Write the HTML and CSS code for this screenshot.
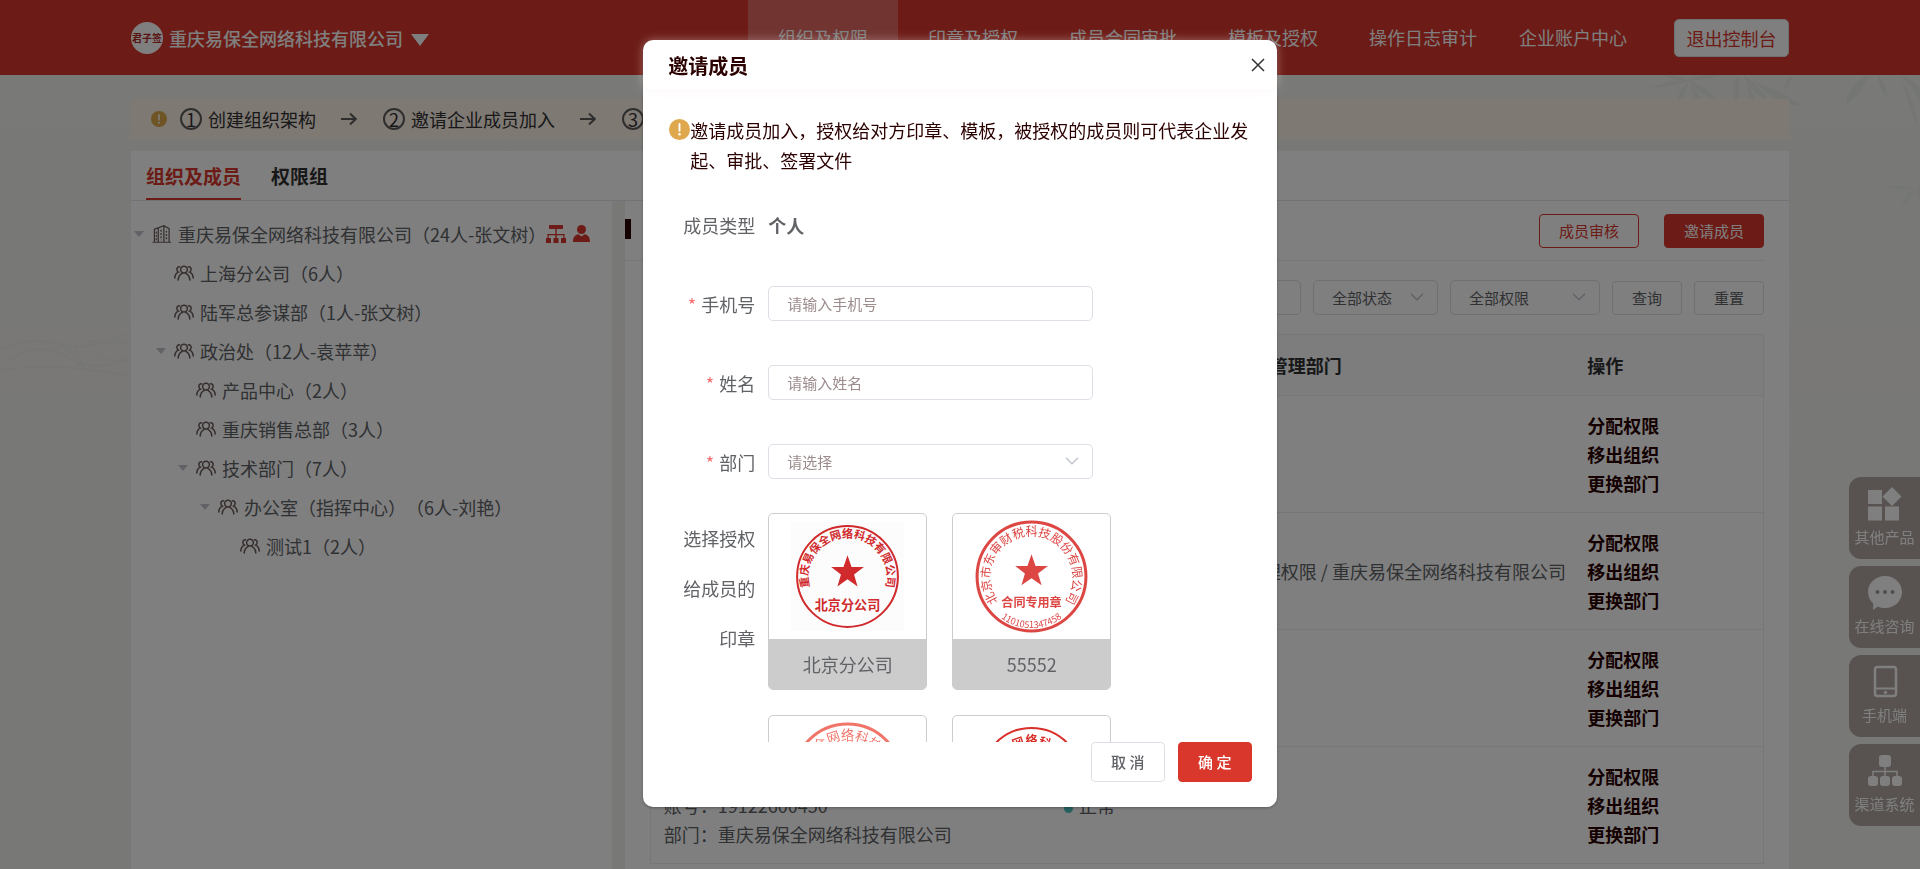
FILE: index.html
```html
<!DOCTYPE html>
<html lang="zh-CN">
<head>
    <meta charset="UTF-8">
    <meta name="viewport" content="width=device-width, initial-scale=1.0">
    <title>组织及权限</title>
    <link rel="stylesheet" href="styles.css">
</head>
<body>

    <!-- shared icons -->
    <svg class="sprite" aria-hidden="true">
        <symbol id="i-warn" viewBox="0 0 20 20">
            <circle cx="10" cy="10" r="10" fill="#dfa84c"/>
            <path d="M10 4.6v6.6" stroke="#fff" stroke-width="1.8" stroke-linecap="round"/>
            <circle cx="10" cy="14.6" r="1.2" fill="#fff"/>
        </symbol>
        <symbol id="i-arrow" viewBox="0 0 16 14">
            <path d="M0 7h15M9 1.5L14.700 7 9 12.500" fill="none" stroke="#5c5c5c" stroke-width="2"/>
        </symbol>
        <symbol id="i-down" viewBox="0 0 14 8">
            <path d="M1 .8l6 6 6-6" fill="none" stroke="#c0c4cc" stroke-width="1.4"/>
        </symbol>
        <symbol id="i-group" viewBox="0 0 20 16">
            <g fill="none" stroke="#6b5858" stroke-width="1.500" stroke-linecap="round">
                <circle cx="10" cy="4.600" r="3.400"/>
                <path d="M4.200 15c.2-3.400 1.800-5.500 4-6.600M15.800 15c-.2-3.400-1.800-5.500-4-6.600"/>
                <path d="M5.600 1.700C3.800 1.600 2.700 3 2.900 4.700c.1 1.200.8 2 1.500 2.400C2.200 8 .9 9.900.8 13M14.400 1.700c1.800-.1 2.900 1.300 2.700 3-.1 1.200-.8 2-1.500 2.400 2.200.9 3.500 2.800 3.600 5.900"/>
            </g>
        </symbol>
        <symbol id="i-building" viewBox="0 0 20 19">
            <g fill="none" stroke="#6b5858" stroke-width="1.300">
                <path d="M0 18.200h19.500M2 18V4.500L6 3v15M6 3l6-2.200V18M12 .8l5.500 3V18"/>
                <path d="M9 5v11M14.700 6v10M4 7v9" stroke-dasharray="2 1.500"/>
            </g>
        </symbol>
        <symbol id="i-star" viewBox="-18 -18 36 36">
            <path d="M0-17L4-5.500H16.200L6.500 2 10 13.800 0 6.800-10 13.800-6.500 2-16.200-5.500H-4z"/>
        </symbol>
    </svg>

    <header class="header">
        <svg class="logo" viewBox="0 0 32 32">
            <circle cx="16" cy="16" r="16" fill="#fff"/>
            <text x="16" y="20" text-anchor="middle" font-size="10" font-weight="700" fill="#b52a22">君子签</text>
        </svg>
        <span class="company">重庆易保全网络科技有限公司</span>
        <svg class="caret" viewBox="0 0 18 12"><path d="M0 0h18L9 12z" fill="#fff"/></svg>
        <nav class="nav">
            <a class="active" href="#">组织及权限</a>
            <a href="#">印章及授权</a>
            <a href="#">成员合同审批</a>
            <a href="#">模板及授权</a>
            <a href="#">操作日志审计</a>
            <a href="#">企业账户中心</a>
        </nav>
        <button class="exit">退出控制台</button>
    </header>

    <main class="page">
        <svg class="bamboo" viewBox="0 0 270 140" aria-hidden="true">
            <g fill="#e8ece6">
                <path d="M0 13Q22 4 40 6Q20 12 0 13zM12 0Q28 0 42 6Q24 6 12 0zM38 4Q56-2 72 0Q56 6 38 4zM40 6Q58 12 68 26Q50 20 40 6zM38 8Q36 20 28 26Q28 14 38 8zM40 8Q52 22 50 28Q40 20 40 8z"/>
                <path d="M88 0Q92 16 86 28Q80 14 88 0zM94 0Q112 14 118 26Q98 16 94 0zM104 6Q134 18 154 32Q120 26 104 6zM98 10Q106 22 104 28Q96 20 98 10zM142 0Q140 10 134 16Q134 6 142 0z"/>
                <path d="M218 0Q212 20 196 30Q198 10 218 0zM228 0Q238 12 238 24Q228 14 228 0zM250 0Q264 14 270 26L270 14Q262 4 250 0zM252 6Q266 26 267 52Q258 28 252 6z"/>
                <path d="M236 112Q252 108 264 114Q250 116 236 112zM264 114Q254 120 252 130Q262 124 264 114zM266 114L270 124V112z"/>
            </g>
        </svg>
        <svg class="hills" viewBox="0 0 131 90" preserveAspectRatio="none" aria-hidden="true">
            <path d="M0 40Q30 26 60 34T131 22M10 50Q40 30 70 48T131 44M60 34Q70 40 80 56M74 36L84 58M84 30Q100 34 131 32M0 60Q60 52 131 66M94 44Q110 54 131 50" fill="none" stroke="#edece8" stroke-width="2"/>
        </svg>

        <div class="steps">
            <svg width="16" height="16"><use href="#i-warn"/></svg>
            <span class="num">1</span><span>创建组织架构</span>
            <svg class="next" width="16" height="14"><use href="#i-arrow"/></svg>
            <span class="num">2</span><span>邀请企业成员加入</span>
            <svg class="next" width="16" height="14"><use href="#i-arrow"/></svg>
            <span class="num">3</span><span>分配权限</span>
        </div>

        <div class="panel">
            <div class="tabs">
                <a class="active" href="#">组织及成员</a>
                <a href="#">权限组</a>
            </div>
            <div class="columns">
                <ul class="tree">
                    <li>
                        <div class="node">
                            <i class="fold"></i><svg class="ico"><use href="#i-building"/></svg>
                            <span>重庆易保全网络科技有限公司（24人-张文树）</span>
                            <svg class="mark" width="20" height="18" viewBox="0 0 20 18" fill="#d9372c"><path d="M3 0h14v4H3zM9.300 4h1.400v9H9.300zM1.500 9h17v1.200h-17z"/><path d="M1.500 9h1.200v4H1.500zM17.300 9h1.200v4h-1.200zM0 13h5v5H0zM7.500 13h5v5h-5zM15 13h5v5h-5z"/></svg>
                            <svg width="17" height="17" viewBox="0 0 17 17" fill="#d9372c"><circle cx="8.500" cy="4.500" r="4.500"/><path d="M0 17c0-5 2-7.200 5.500-7.800l3 2.300 3-2.300C15 9.800 17 12 17 17z"/></svg>
                        </div>
                        <ul>
                            <li><div class="node"><i class="fold none"></i><svg class="ico"><use href="#i-group"/></svg><span>上海分公司（6人）</span></div></li>
                            <li><div class="node"><i class="fold none"></i><svg class="ico"><use href="#i-group"/></svg><span>陆军总参谋部（1人-张文树）</span></div></li>
                            <li>
                                <div class="node"><i class="fold"></i><svg class="ico"><use href="#i-group"/></svg><span>政治处（12人-袁苹苹）</span></div>
                                <ul>
                                    <li><div class="node"><i class="fold none"></i><svg class="ico"><use href="#i-group"/></svg><span>产品中心（2人）</span></div></li>
                                    <li><div class="node"><i class="fold none"></i><svg class="ico"><use href="#i-group"/></svg><span>重庆销售总部（3人）</span></div></li>
                                    <li>
                                        <div class="node"><i class="fold"></i><svg class="ico"><use href="#i-group"/></svg><span>技术部门（7人）</span></div>
                                        <ul>
                                            <li>
                                                <div class="node"><i class="fold"></i><svg class="ico"><use href="#i-group"/></svg><span>办公室（指挥中心）（6人-刘艳）</span></div>
                                                <ul>
                                                    <li><div class="node"><i class="fold none"></i><svg class="ico"><use href="#i-group"/></svg><span>测试1（2人）</span></div></li>
                                                </ul>
                                            </li>
                                        </ul>
                                    </li>
                                </ul>
                            </li>
                        </ul>
                    </li>
                </ul>

                <section class="members">
                    <div class="toolbar">
                        <h2></h2>
                        <button class="btn outline">成员审核</button>
                        <button class="btn primary">邀请成员</button>
                    </div>
                    <div class="filters">
                        <input type="text" aria-label="成员搜索">
                        <div class="select w-status">
                            <select aria-label="状态"><option>全部状态</option></select>
                            <svg><use href="#i-down"/></svg>
                        </div>
                        <div class="select w-auth">
                            <select aria-label="权限"><option>全部权限</option></select>
                            <svg><use href="#i-down"/></svg>
                        </div>
                        <button class="btn small">查询</button>
                        <button class="btn small">重置</button>
                    </div>
                    <table class="table">
                        <thead>
                            <tr><th class="c-user">成员</th><th class="c-status">状态</th><th class="c-dept">权限/可管理部门</th><th class="c-op">操作</th></tr>
                        </thead>
                        <tbody>
                            <tr>
                                <td></td>
                                <td></td>
                                <td></td>
                                <td class="ops"><a href="#">分配权限</a><a href="#">移出组织</a><a href="#">更换部门</a></td>
                            </tr>
                            <tr>
                                <td></td>
                                <td></td>
                                <td>成员管理权限 / 重庆易保全网络科技有限公司</td>
                                <td class="ops"><a href="#">分配权限</a><a href="#">移出组织</a><a href="#">更换部门</a></td>
                            </tr>
                            <tr>
                                <td></td>
                                <td></td>
                                <td></td>
                                <td class="ops"><a href="#">分配权限</a><a href="#">移出组织</a><a href="#">更换部门</a></td>
                            </tr>
                            <tr>
                                <td><br>账号：19122600450<br>部门：重庆易保全网络科技有限公司</td>
                                <td><i class="dot"></i>正常</td>
                                <td></td>
                                <td class="ops"><a href="#">分配权限</a><a href="#">移出组织</a><a href="#">更换部门</a></td>
                            </tr>
                        </tbody>
                    </table>
                </section>
            </div>
        </div>
    </main>

    <aside class="side">
        <a href="#">
            <svg width="34" height="34" viewBox="0 0 34 34" fill="#fff"><path d="M0 3h14v14H0zM0 19.500h14v14H0zM17 19.500h14v14H17zM24 0l9.500 9.500L24 19l-9.500-9.500z"/></svg>
            <span>其他产品</span>
        </a>
        <a href="#">
            <svg width="34" height="34" viewBox="0 0 34 34"><path d="M17 0c9.500 0 17 7 17 16s-7.500 16-17 16c-2.600 0-5-.5-7-1.500L5 34l.3-6.400C2 24.700 0 20.600 0 16 0 7 7.500 0 17 0z" fill="#fff"/><g fill="#a89f9a"><circle cx="9.500" cy="16" r="2"/><circle cx="17" cy="16" r="2"/><circle cx="24.500" cy="16" r="2"/></g></svg>
            <span>在线咨询</span>
        </a>
        <a href="#">
            <svg width="34" height="34" viewBox="0 0 34 34"><rect x="7" y="2" width="21" height="29" rx="2.500" fill="none" stroke="#fff" stroke-width="2.500"/><path d="M7 23.500h21" stroke="#fff" stroke-width="2"/><circle cx="17.500" cy="27.500" r="1.700" fill="#fff"/></svg>
            <span>手机端</span>
        </a>
        <a href="#">
            <svg width="34" height="34" viewBox="0 0 34 34" fill="#fff"><rect x="11" y="1" width="12" height="12" rx="3"/><path d="M17 13v10M5 23v-5.500h24V23" fill="none" stroke="#fff" stroke-width="1.500"/><rect x="0" y="22" width="10" height="10" rx="3"/><rect x="12" y="22" width="10" height="10" rx="3"/><rect x="24" y="22" width="10" height="10" rx="3"/></svg>
            <span>渠道系统</span>
        </a>
    </aside>

    <div class="mask">
        <div class="dialog" role="dialog" aria-labelledby="dialog-title">
            <div class="dialog-head">
                <h3 id="dialog-title">邀请成员</h3>
                <button class="close" aria-label="关闭"><svg width="14" height="14" viewBox="0 0 14 14"><path d="M1 1l12 12M13 1L1 13" stroke="#333" stroke-width="1.500"/></svg></button>
            </div>
            <form class="dialog-body">
                <div class="note">
                    <svg width="20" height="20"><use href="#i-warn"/></svg>
                    <p>邀请成员加入，授权给对方印章、模板，被授权的成员则可代表企业发起、审批、签署文件</p>
                </div>
                <div class="field">
                    <span class="label">成员类型</span>
                    <strong>个人</strong>
                </div>
                <div class="field">
                    <label class="label required" for="phone">手机号</label>
                    <input id="phone" type="text" placeholder="请输入手机号">
                </div>
                <div class="field">
                    <label class="label required" for="name">姓名</label>
                    <input id="name" type="text" placeholder="请输入姓名">
                </div>
                <div class="field">
                    <label class="label required" for="dept">部门</label>
                    <div class="select">
                        <select id="dept"><option>请选择</option></select>
                        <svg><use href="#i-down"/></svg>
                    </div>
                </div>
                <div class="field seals-field">
                    <span class="label">选择授权给成员的印章</span>
                    <div class="seals">
                        <figure class="seal">
                            <svg viewBox="-62 -62 124 124" fill="#d02a2c">
                                <path id="arc1" d="M-31 24A39 39 0 1 1 31 24" fill="none"/>
                                <rect x="-56" y="-54" width="112" height="108" fill="#fcfcfc"/>
                                <circle r="50" fill="none" stroke="#d02a2c" stroke-width="2"/>
                                <text class="ring s11"><textPath href="#arc1" startOffset="50%">重庆易保全网络科技有限公司</textPath></text>
                                <use href="#i-star" x="-18" y="-22" width="36" height="36"/>
                                <text class="ring s13" y="33">北京分公司</text>
                            </svg>
                            <figcaption>北京分公司</figcaption>
                        </figure>
                        <figure class="seal">
                            <svg viewBox="-62 -62 124 124" fill="#dc4643">
                                <path id="arc2" d="M-35 22A41 41 0 1 1 35 22" fill="none"/>
                                <path id="arc2b" d="M-44 25A50 50 0 0 0 44 25" fill="none"/>
                                <circle r="54" fill="none" stroke="#dc4643" stroke-width="3"/>
                                <text class="ring s12 thin"><textPath href="#arc2" startOffset="50%">北京市东审财税科技股份有限公司</textPath></text>
                                <use href="#i-star" x="-18" y="-23" width="36" height="36"/>
                                <text class="ring s12" y="30">合同专用章</text>
                                <text class="ring s9 thin"><textPath href="#arc2b" startOffset="50%">1101051347458</textPath></text>
                            </svg>
                            <figcaption>55552</figcaption>
                        </figure>
                        <figure class="seal">
                            <svg viewBox="-62 -62 124 124" fill="#f07468">
                                <path id="arc3" d="M-28 30A40 40 0 1 1 28 30" fill="none"/>
                                <circle r="54" fill="none" stroke="#f07468" stroke-width="3"/>
                                <text class="ring s13 thin"><textPath href="#arc3" startOffset="50%">重庆易保全网络科技有限公司</textPath></text>
                            </svg>
                        </figure>
                        <figure class="seal">
                            <svg viewBox="-62 -62 124 124" fill="#d9302a">
                                <path id="arc4" d="M-28 28A37 37 0 1 1 28 28" fill="none"/>
                                <circle r="50" fill="none" stroke="#d9302a" stroke-width="2"/>
                                <text class="ring s12"><textPath href="#arc4" startOffset="50%">重庆易保全网络科技有限公司</textPath></text>
                            </svg>
                        </figure>
                    </div>
                </div>
            </form>
            <div class="dialog-foot">
                <button class="btn">取 消</button>
                <button class="btn primary">确 定</button>
            </div>
        </div>
    </div>

</body>
</html>
```
FILE: styles.css
```css
* {
    box-sizing: border-box;
}
body {
    margin: 0;
    height: 100vh;
    overflow: hidden;
    display: flex;
    flex-direction: column;
    background: linear-gradient(#f6f5f2, #f0f3ee 20%, #f2f1ee 40%, #f0f2ee 70%, #f1f0ed);
    font-family: "Noto Sans CJK SC", "Noto Sans", sans-serif;
    font-size: 18px;
    color: #606266;
    text-spacing-trim: space-all;
}
a {
    color: inherit;
    text-decoration: none;
}
button, input, select {
    font: inherit;
    color: inherit;
}
button {
    cursor: pointer;
}
ul {
    margin: 0;
    padding: 0;
    list-style: none;
}
.sprite {
    position: absolute;
    width: 0;
    height: 0;
}

/* header */
.header {
    flex: none;
    display: flex;
    align-items: center;
    height: 75px;
    padding: 0 131px;
    background: #d9372c;
    color: #fff;
}
.logo {
    width: 32px;
    height: 32px;
    margin-right: 6px;
}
.company {
    font-weight: 500;
}
.caret {
    width: 18px;
    height: 12px;
    margin: 4px 0 0 8px;
}
.nav {
    display: flex;
    align-self: stretch;
    margin-left: auto;
}
.nav a {
    width: 150px;
    line-height: 75px;
    text-align: center;
}
.nav .active {
    background: rgba(255, 255, 255, 0.25);
}
.exit {
    width: 115px;
    height: 38px;
    margin-left: 26px;
    padding: 0;
    border: 1px solid #dcdfe6;
    border-radius: 5px;
    background: #fff;
    color: #d9372c;
}

/* page */
.page {
    flex: 1;
    min-height: 0;
    position: relative;
    display: flex;
    flex-direction: column;
    padding: 24px 131px 0;
}
.bamboo {
    position: absolute;
    top: 0;
    right: 0;
    width: 270px;
    height: 140px;
}
.hills {
    position: absolute;
    top: 235px;
    left: 0;
    width: 131px;
    height: 90px;
}
.steps {
    flex: none;
    position: relative;
    display: flex;
    align-items: center;
    height: 40px;
    margin-bottom: 12px;
    padding: 0 20px;
    background: #fdf2e6;
    color: #303133;
}
.num {
    width: 22px;
    height: 22px;
    margin: 0 6px 0 13px;
    border: 2px solid #5c5c5c;
    border-radius: 50%;
    line-height: 18px;
    text-align: center;
}
.next {
    margin: 0 13px 0 25px;
}
.panel {
    flex: 1;
    min-height: 0;
    position: relative;
    display: flex;
    flex-direction: column;
}
.tabs {
    flex: none;
    display: flex;
    gap: 30px;
    height: 50px;
    padding: 0 15px;
    border-bottom: 1px solid #e4e7ed;
    background: #fff;
    font-size: 19px;
    font-weight: 700;
    line-height: 50px;
    color: #303133;
}
.tabs .active {
    border-bottom: 2px solid #d9372c;
    color: #d9372c;
}
.columns {
    flex: 1;
    min-height: 0;
    display: flex;
    gap: 13px;
}
.tree {
    width: 29%;
    padding: 13px 3px;
    background: #fff;
}
.tree ul {
    padding-left: 22px;
}
.node {
    display: flex;
    align-items: center;
    height: 39px;
    white-space: nowrap;
}
.fold {
    margin-right: 8px;
    border: 5px solid transparent;
    border-top: 6px solid #c0c4cc;
    border-bottom: 0;
}
.fold.none {
    border-top-color: transparent;
}
.ico {
    width: 20px;
    height: 18px;
    margin-right: 6px;
}
.mark {
    margin-right: 7px;
}

/* members */
.members {
    flex: 1;
    min-width: 0;
    padding-right: 25px;
    background: #fff;
}
.toolbar {
    display: flex;
    align-items: center;
    gap: 25px;
    height: 60px;
    border-bottom: 1px solid #ebeef5;
}
.toolbar h2 {
    height: 20px;
    margin: 0 auto 4px 0;
    border-left: 6px solid #2b0000;
}
.btn {
    width: 100px;
    height: 34px;
    padding: 0;
    border: 1px solid #dcdfe6;
    border-radius: 4px;
    background: #fff;
    font-size: 15px;
}
.btn.outline {
    border-color: #d9372c;
    color: #d9372c;
}
.btn.primary {
    border-color: #d9372c;
    background: #d9372c;
    color: #fff;
}
.btn.small {
    width: 70px;
}
.filters {
    display: flex;
    align-items: center;
    justify-content: flex-end;
    gap: 12px;
    padding: 19px 0;
}
input, select {
    width: 100%;
    height: 35px;
    padding: 0 18px;
    border: 1px solid #dcdfe6;
    border-radius: 5px;
    background: #fff;
    font-size: 15px;
    appearance: none;
}
input::placeholder {
    color: #9c8c8c;
}
.filters input {
    width: 240px;
}
.select {
    position: relative;
}
.select svg {
    position: absolute;
    top: 13px;
    right: 14px;
    width: 14px;
    height: 8px;
    pointer-events: none;
}
.w-status {
    width: 125px;
}
.w-auth {
    width: 150px;
}
.table {
    width: calc(100% - 25px);
    margin-left: 25px;
    border: 1px solid #ebeef5;
    border-collapse: collapse;
    table-layout: fixed;
}
.table th, .table td {
    height: 117px;
    padding: 0 13px;
    border-bottom: 1px solid #ebeef5;
    line-height: 29px;
    text-align: left;
    white-space: nowrap;
}
.table th {
    height: 61px;
    background: #fafafa;
    color: #303133;
}
.c-user {
    width: 36%;
}
.c-status {
    width: 13%;
}
.c-dept {
    width: 34%;
}
.c-op {
    width: 17%;
}
.dot {
    display: inline-block;
    width: 9px;
    height: 9px;
    margin-right: 6px;
    border-radius: 50%;
    background: #4fc3c3;
}
.ops a {
    display: block;
    font-weight: 700;
    color: #2b0000;
}

/* side links */
.side {
    position: fixed;
    top: 477px;
    right: 0;
    display: grid;
    gap: 7px;
}
.side a {
    display: flex;
    flex-direction: column;
    align-items: center;
    gap: 5px;
    width: 71px;
    height: 82px;
    padding-top: 10px;
    border-radius: 12px 0 0 12px;
    background: #b0a7a3;
    font-size: 15px;
    line-height: 22px;
    color: #fff;
}

/* dialog */
.mask {
    position: fixed;
    inset: 0;
    padding-top: 40px;
    background: rgba(0, 0, 0, 0.5);
}
.dialog {
    width: 33%;
    margin: 0 auto;
    border-radius: 10px;
    background: #fff;
    box-shadow: 0 1px 3px rgba(0, 0, 0, 0.3);
}
.dialog-head {
    display: flex;
    align-items: center;
    justify-content: space-between;
    height: 50px;
    padding: 0 12px 0 25px;
    border-radius: 10px;
    box-shadow: 0 0 10px rgba(245, 225, 225, 0.4);
}
.dialog-head h3 {
    margin: 0;
    font-size: 20px;
    color: #2b0000;
}
.close {
    display: flex;
    padding: 0;
    border: 0;
    background: none;
}
.dialog-body {
    height: 75vh;
    padding: 25px 26px 0;
    overflow: hidden;
}
.note {
    display: flex;
    color: #2b0000;
}
.note svg {
    flex: none;
    width: 21px;
    height: 21px;
    margin-top: 4px;
}
.note p {
    margin: 0;
    line-height: 30px;
}
.field {
    display: flex;
    align-items: center;
    gap: 13px;
    height: 35px;
    margin-top: 44px;
}
.note + .field {
    margin-top: 32px;
}
.label {
    width: 86px;
    flex: none;
    text-align: right;
}
.required::before {
    content: "*";
    margin-right: 5px;
    color: #f56c6c;
}
.field input, .field .select {
    width: 325px;
}
.field select {
    color: #9c8c8c;
}
.seals-field {
    align-items: flex-start;
    height: auto;
    margin-top: 34px;
}
.seals-field .label {
    padding-left: 14px;
    line-height: 50px;
}
.seals {
    display: grid;
    grid-template-columns: 159px 159px;
    gap: 25px;
}
.seal {
    margin: 0;
    border: 1px solid #ccc;
    border-radius: 5px;
    overflow: hidden;
}
.seal svg {
    display: block;
    height: 125px;
    margin: 0 auto;
}
.seal figcaption {
    background: #ccc;
    line-height: 50px;
    text-align: center;
}
.ring {
    text-anchor: middle;
    font-weight: 700;
}
.s9 {
    font-size: 9px;
}
.s11 {
    font-size: 11px;
}
.s12 {
    font-size: 12px;
}
.s13 {
    font-size: 13px;
}
.thin {
    font-weight: 400;
}
.dialog-foot {
    display: flex;
    justify-content: flex-end;
    gap: 13px;
    padding: 0 25px 25px;
}
.dialog-foot .btn {
    width: 74px;
    height: 40px;
    font-weight: 500;
}
```
